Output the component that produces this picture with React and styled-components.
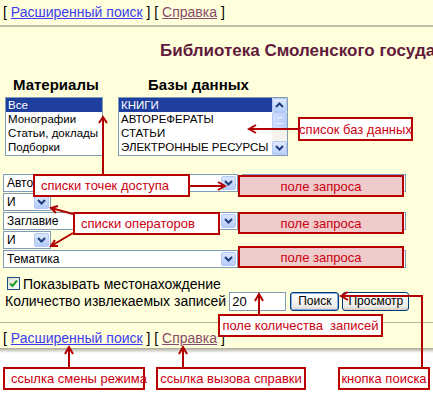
import React from 'react';
import styled, { createGlobalStyle } from 'styled-components';

const GlobalStyle = createGlobalStyle`
    html, body {
        margin: 0;
        padding: 0;
        background: #ffffff;
    }
    body {
        font-family: "Liberation Sans", Arial, sans-serif;
    }
`;

const materials = ['Все', 'Монографии', 'Статьи, доклады', 'Подборки'];
const databases = ['КНИГИ', 'АВТОРЕФЕРАТЫ', 'СТАТЬИ', 'ЭЛЕКТРОННЫЕ РЕСУРСЫ'];

const searchRows = [
    { kind: 'field', label: 'Автор' },
    { kind: 'op', label: 'И' },
    { kind: 'field', label: 'Заглавие' },
    { kind: 'op', label: 'И' },
    { kind: 'field', label: 'Тематика' },
];

const notes = [
    { text: 'список баз данных', left: 298, top: 117, width: 115, height: 24 },
    { text: 'списки точек доступа', left: 33, top: 174, width: 157, height: 23, align: 'left' },
    { text: 'списки операторов', left: 73, top: 212, width: 147, height: 23, align: 'left' },
    { text: 'поле запроса', left: 238, top: 175, width: 166, height: 22, pink: true },
    { text: 'поле запроса', left: 238, top: 212, width: 166, height: 22, pink: true },
    { text: 'поле запроса', left: 238, top: 246, width: 166, height: 22, pink: true },
    { text: 'поле количества  записей', left: 218, top: 314, width: 165, height: 23 },
    { text: 'ссылка смены режима', left: 3, top: 367, width: 142, height: 23, align: 'left' },
    { text: 'ссылка вызова справки', left: 156, top: 367, width: 150, height: 23 },
    { text: 'кнопка поиска', left: 338, top: 367, width: 92, height: 23 },
];

function Chevron() {
    return (
        <svg width="9" height="6" viewBox="0 0 9 6">
            <path d="M1 1 L4.5 4.5 L8 1" fill="none" stroke="#1c3c7c" strokeWidth="2" />
        </svg>
    );
}

function FakeSelect({ label, width }) {
    return (
        <SelectBox $width={width}>
            <SelectText>{label}</SelectText>
            <DropButton><Chevron /></DropButton>
        </SelectBox>
    );
}

function Arrows() {
    const c = '#b00000';
    return (
        <ArrowLayer width="433" height="403" viewBox="0 0 433 403">
            <g fill="none" stroke={c} strokeWidth="2">
                <path d="M103 118 V175" />
                <path d="M99 123 L103 117 L107 123" />
                <path d="M298 129 H250" />
                <path d="M256 125 L249 129 L256 133" />
                <path d="M190 186 H224" />
                <path d="M218 182 L225 186 L218 190" />
                <path d="M73 214 L51 208" />
                <path d="M58 206 L51 208 L56 213" />
                <path d="M73 233 L51 246" />
                <path d="M55 240 L51 246 L58 246" />
                <path d="M259 314 V296" />
                <path d="M255 301 L259 294 L263 301" />
                <path d="M422 367 V296 H342" />
                <path d="M348 292 L341 296 L348 300" />
                <path d="M69 367 V349" />
                <path d="M65 354 L69 347 L73 354" />
                <path d="M183 367 V349" />
                <path d="M179 354 L183 347 L187 354" />
            </g>
        </ArrowLayer>
    );
}

export default function App() {
    return (
        <Page>
            <GlobalStyle />
            <Sheet>
                <LinkBar>
                    [ <ModeLink href="#">Расширенный поиск</ModeLink> ] [ <HelpLink href="#">Справка</HelpLink> ]
                </LinkBar>
                <Rule $thick />
                <Title>Библиотека Смоленского государственного университета</Title>
                <Headers>
                    <Header $width={135} $indent={13}>Материалы</Header>
                    <Header>Базы данных</Header>
                </Headers>
                <Lists>
                    <ListBox $width={98}>
                        {materials.map((m, i) => (
                            <ListItem key={m} $selected={i === 0}>{m}</ListItem>
                        ))}
                    </ListBox>
                    <ListBox $width={170} $scroll>
                        <ListItems>
                            {databases.map((d, i) => (
                                <ListItem key={d} $selected={i === 0}>{d}</ListItem>
                            ))}
                        </ListItems>
                        <ScrollBar>
                            <ScrollBtn><svg width="9" height="6" viewBox="0 0 9 6"><path d="M1 5 L4.5 1.5 L8 5" fill="none" stroke="#1c3c7c" strokeWidth="2" /></svg></ScrollBtn>
                            <Thumb><Grip /></Thumb>
                            <Track />
                            <ScrollBtn><Chevron /></ScrollBtn>
                        </ScrollBar>
                    </ListBox>
                </Lists>
                <Form>
                    {searchRows.map((r, i) => (
                        <FormRow key={i}>
                            {r.kind === 'field' ? (
                                <>
                                    <FakeSelect label={r.label} width={235} />
                                    <QueryInput />
                                </>
                            ) : (
                                <FakeSelect label={r.label} width={48} />
                            )}
                        </FormRow>
                    ))}
                </Form>
                <CheckRow>
                    <CheckBox>
                        <svg width="9" height="9" viewBox="0 0 9 9"><path d="M1 4.5 L3.5 7 L8 1.5" fill="none" stroke="#21a121" strokeWidth="2" /></svg>
                    </CheckBox>
                    Показывать местонахождение
                </CheckRow>
                <CountRow>
                    Количество извлекаемых записей
                    <CountInput>20</CountInput>
                    <XpButton $default>Поиск</XpButton>
                    <XpButton>Просмотр</XpButton>
                </CountRow>
                <Rule />
                <LinkBar $bottom>
                    [ <ModeLink href="#">Расширенный поиск</ModeLink> ] [ <HelpLink href="#">Справка</HelpLink> ]
                </LinkBar>
            </Sheet>
            <Shadow />
            <Arrows />
            {notes.map((n, i) => (
                <Note
                    key={i}
                    $pink={n.pink}
                    $align={n.align}
                    style={{ left: n.left, top: n.top, width: n.width, height: n.height }}
                >
                    {n.text}
                </Note>
            ))}
        </Page>
    );
}

const Page = styled.div`
    position: relative;
    width: 433px;
    height: 403px;
    overflow: hidden;
    background: #ffffff;
`;

const Sheet = styled.div`
    background: #ffffdc;
    height: 348px;
    display: flex;
    flex-direction: column;
`;

const LinkBar = styled.div`
    height: ${p => (p.$bottom ? '26px' : '26px')};
    padding: ${p => (p.$bottom ? '7px 0 0 3px' : '4px 0 0 3px')};
    box-sizing: border-box;
    font-size: 14px;
    color: #000;
    white-space: nowrap;
`;

const ModeLink = styled.a`
    color: #3c3cf0;
    text-decoration: underline;
`;

const HelpLink = styled.a`
    color: #8a4a6a;
    text-decoration: underline;
`;

const Rule = styled.div`
    height: ${p => (p.$thick ? '2px' : '1px')};
    background: ${p => (p.$thick ? '#bdbdaa' : '#b4b4a4')};
    margin-top: ${p => (p.$thick ? '0' : '10px')};
    margin-bottom: 0;
    flex-shrink: 0;
`;

const Title = styled.div`
    padding: 14px 0 0 160px;
    height: 39px;
    box-sizing: border-box;
    font-size: 17px;
    font-weight: bold;
    color: #621a3c;
    white-space: nowrap;
`;

const Headers = styled.div`
    display: flex;
    padding-top: 10px;
    height: 32px;
    box-sizing: border-box;
`;

const Header = styled.div`
    width: ${p => (p.$width ? `${p.$width}px` : 'auto')};
    padding-left: ${p => (p.$indent ? `${p.$indent}px` : '0')};
    font-size: 15px;
    font-weight: bold;
    color: #000;
`;

const Lists = styled.div`
    display: flex;
    gap: 15px;
    padding-left: 5px;
    height: 80px;
`;

const ListBox = styled.div`
    width: ${p => p.$width}px;
    height: 59px;
    border: 1px solid #7f9db9;
    background: #fff;
    display: flex;
    box-sizing: border-box;
    flex-direction: ${p => (p.$scroll ? 'row' : 'column')};
`;

const ListItems = styled.div`
    flex: 1;
    display: flex;
    flex-direction: column;
    overflow: hidden;
`;

const ListItem = styled.div`
    height: 14px;
    line-height: 14px;
    font-size: 11.5px;
    padding-left: 2px;
    white-space: nowrap;
    color: ${p => (p.$selected ? '#fff' : '#000')};
    background: ${p => (p.$selected ? '#1f3f9e' : 'transparent')};
`;

const ScrollBar = styled.div`
    width: 15px;
    display: flex;
    flex-direction: column;
    background: #f4f3ee;
`;

const ScrollBtn = styled.div`
    height: 14px;
    border: 1px solid #b4c8f6;
    border-radius: 2px;
    background: linear-gradient(#e0eafe, #b9cffb);
    display: flex;
    align-items: center;
    justify-content: center;
    box-sizing: border-box;
`;

const Thumb = styled.div`
    height: 18px;
    border: 1px solid #b4c8f6;
    border-radius: 2px;
    background: linear-gradient(90deg, #cddcfc, #bcd0fb);
    display: flex;
    align-items: center;
    justify-content: center;
    box-sizing: border-box;
`;

const Grip = styled.div`
    width: 6px;
    height: 5px;
    border-top: 1px solid #eef3fe;
    border-bottom: 1px solid #eef3fe;
`;

const Track = styled.div`
    flex: 1;
`;

const Form = styled.div`
    display: flex;
    flex-direction: column;
    gap: 1px;
    padding-left: 3px;
`;

const FormRow = styled.div`
    display: flex;
    gap: 4px;
    height: 18px;
`;

const SelectBox = styled.div`
    width: ${p => p.$width}px;
    height: 18px;
    border: 1px solid #7f9db9;
    background: #fff;
    display: flex;
    align-items: center;
    box-sizing: border-box;
    padding: 1px;
`;

const SelectText = styled.div`
    flex: 1;
    font-size: 12px;
    padding-left: 2px;
    color: #000;
`;

const DropButton = styled.div`
    width: 15px;
    height: 14px;
    border: 1px solid #b4c8f6;
    border-radius: 2px;
    background: linear-gradient(#dce7fe, #b6cbfa);
    display: flex;
    align-items: center;
    justify-content: center;
    box-sizing: border-box;
`;

const QueryInput = styled.div`
    width: 164px;
    height: 18px;
    border: 1px solid #7f9db9;
    background: #fff;
    box-sizing: border-box;
`;

const CheckRow = styled.div`
    display: flex;
    align-items: center;
    gap: 3px;
    margin-top: 8px;
    padding-left: 7px;
    font-size: 14px;
    height: 15px;
    color: #000;
`;

const CheckBox = styled.div`
    width: 13px;
    height: 13px;
    border: 1px solid #1c5180;
    background: linear-gradient(135deg, #dcdcd7, #fff);
    display: flex;
    align-items: center;
    justify-content: center;
    box-sizing: border-box;
`;

const CountRow = styled.div`
    display: flex;
    align-items: center;
    padding-left: 5px;
    margin-top: 0;
    height: 21px;
    font-size: 14px;
    color: #000;
    white-space: nowrap;
`;

const CountInput = styled.div`
    width: 57px;
    height: 19px;
    margin-left: 3px;
    border: 1px solid #7f9db9;
    background: #fff;
    box-sizing: border-box;
    font-size: 13px;
    line-height: 17px;
    padding-left: 2px;
`;

const XpButton = styled.div`
    height: 19px;
    margin-left: ${p => (p.$default ? '4px' : '3px')};
    padding: 0 ${p => (p.$default ? '7px' : '5px')};
    border: 1px solid #003c74;
    border-radius: 3px;
    box-shadow: ${p => (p.$default ? 'inset 0 0 0 1px #8aa8ec' : 'none')};
    background: linear-gradient(#ffffff, #ecebe6 80%, #d6d0c5);
    font-size: 12px;
    line-height: 17px;
    box-sizing: border-box;
    color: #000;
`;

const Shadow = styled.div`
    height: 5px;
    background: linear-gradient(#a7a796, #ffffff);
`;

const ArrowLayer = styled.svg`
    position: absolute;
    left: 0;
    top: 0;
    pointer-events: none;
`;

const Note = styled.div`
    position: absolute;
    box-sizing: border-box;
    border: 2px solid #b80000;
    background: ${p => (p.$pink ? '#efcbcb' : '#ffffff')};
    color: #cc0010;
    font-size: 13px;
    display: flex;
    align-items: center;
    justify-content: ${p => (p.$align === 'left' ? 'flex-start' : 'center')};
    padding-left: ${p => (p.$align === 'left' ? '6px' : '0')};
    white-space: pre;
`;
